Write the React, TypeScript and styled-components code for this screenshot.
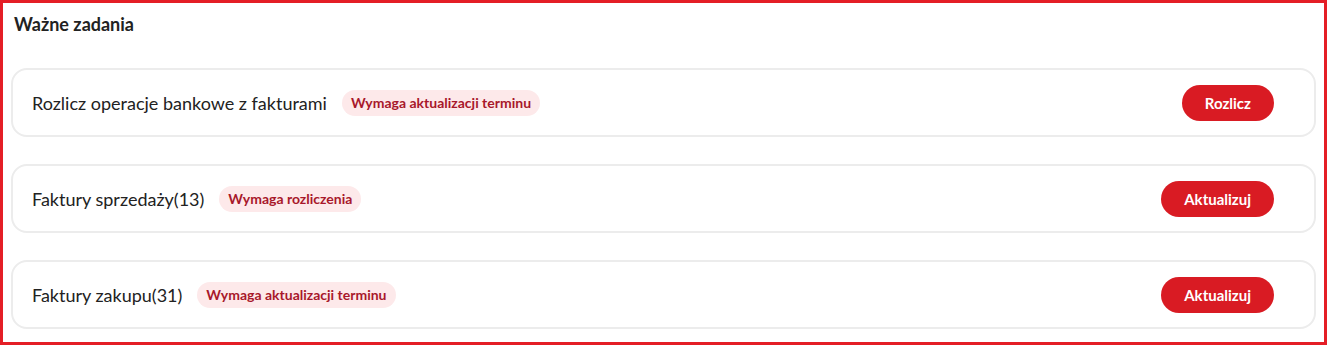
import React from "react";
import styled, { createGlobalStyle } from "styled-components";

const Global = createGlobalStyle`
  html, body { margin: 0; padding: 0; background: #fff; }
  * { box-sizing: border-box; }
  body { font-family: Lato, "Open Sans", sans-serif; }
`;

const Frame = styled.section`
  width: 1327px;
  height: 345px;
  border: 3px solid #e41e26;
  padding: 9px 8px 0 8px;
  display: flex;
  flex-direction: column;
`;

const Title = styled.h2`
  margin: 0 0 0 3px;
  font-size: 18px;
  line-height: 24px;
  font-weight: 700;
  color: #222;
`;

const List = styled.div`
  margin-top: 32px;
  display: flex;
  flex-direction: column;
  gap: 27px;
`;

const Card = styled.div`
  height: 69px;
  border: 2px solid #ececec;
  border-radius: 16px;
  padding: 0 40px 0 19px;
  display: flex;
  align-items: center;
`;

const Name = styled.span`
  font-size: 18px;
  color: #222;
`;

const Badge = styled.span`
  margin-left: 15px;
  background: #fde9ea;
  color: #a8182b;
  font-size: 14px;
  font-weight: 700;
  height: 26px;
  line-height: 26px;
  padding: 0 9px;
  border-radius: 13px;
`;

const Button = styled.button`
  margin-left: auto;
  height: 36px;
  border: none;
  border-radius: 18px;
  background: #d91b23;
  color: #fff;
  font-family: inherit;
  font-size: 15px;
  font-weight: 700;
  padding: 0 23px;
  cursor: pointer;
`;

const tasks = [
  { name: "Rozlicz operacje bankowe z fakturami", badge: "Wymaga aktualizacji terminu", action: "Rozlicz" },
  { name: "Faktury sprzedaży(13)", badge: "Wymaga rozliczenia", action: "Aktualizuj" },
  { name: "Faktury zakupu(31)", badge: "Wymaga aktualizacji terminu", action: "Aktualizuj" },
];

export default function App() {
  return (
    <>
      <Global />
      <Frame>
        <Title>Ważne zadania</Title>
        <List>
          {tasks.map((t) => (
            <Card key={t.name}>
              <Name>{t.name}</Name>
              <Badge>{t.badge}</Badge>
              <Button>{t.action}</Button>
            </Card>
          ))}
        </List>
      </Frame>
    </>
  );
}
